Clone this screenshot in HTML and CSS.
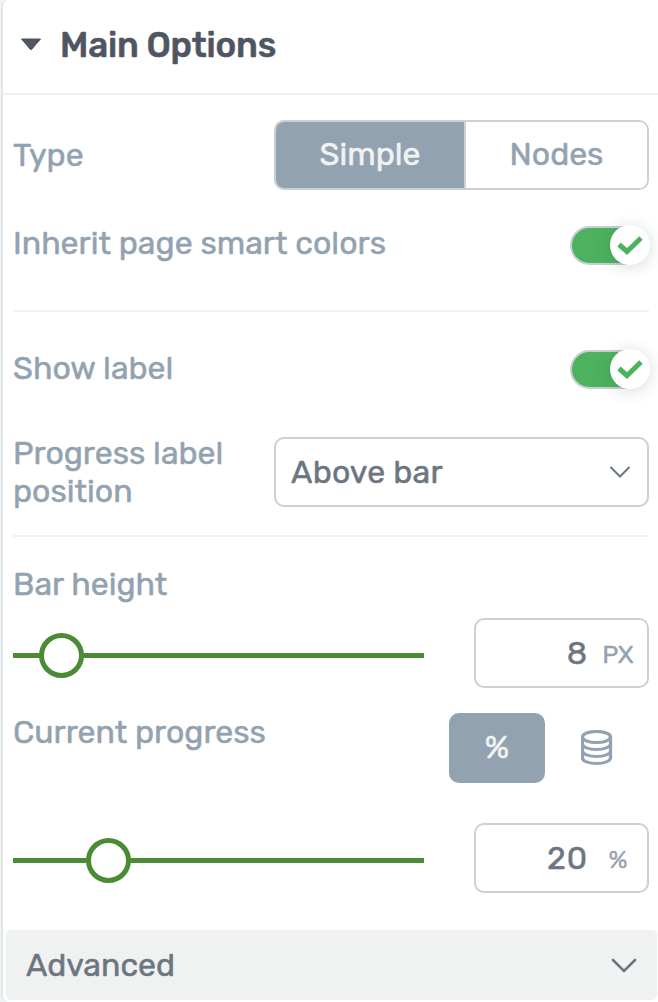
FILE: index.html
```
<!DOCTYPE html>
<html>
<head>
    <meta charset="UTF-8">
    <meta name="viewport" content="width=device-width, initial-scale=1.0">
    <title>Main Options</title>
    <link rel="stylesheet" href="styles.css">
</head>
<body>
    <div class="panel">
        <div class="panel-header">
            <svg class="caret" width="22" height="13" viewBox="0 0 22 13"><path d="M1.500 1h19L12 11q-1 1-2 0z" fill="#4f5661" stroke="#4f5661" stroke-linejoin="round"/></svg>
            <h2>Main Options</h2>
        </div>

        <div class="options">
            <!-- Type -->
            <div class="row type-row">
                <span class="label">Type</span>
                <div class="segmented">
                    <button class="segment active">Simple</button>
                    <button class="segment">Nodes</button>
                </div>
            </div>

            <div class="row toggle-row">
                <span class="label">Inherit page smart colors</span>
                <div class="toggle">
                    <div class="knob"><svg width="26" height="20" viewBox="0 0 26 20"><path d="M2 9.500l8 7L24 3" fill="none" stroke="#4cb25e" stroke-width="5"/></svg></div>
                </div>
            </div>

            <!-- Label -->
            <div class="row toggle-row show-row">
                <span class="label">Show label</span>
                <div class="toggle">
                    <div class="knob"><svg width="26" height="20" viewBox="0 0 26 20"><path d="M2 9.500l8 7L24 3" fill="none" stroke="#4cb25e" stroke-width="5"/></svg></div>
                </div>
            </div>

            <div class="row position-row">
                <span class="label">Progress label<br>position</span>
                <div class="select">
                    <span>Above bar</span>
                    <svg width="22" height="14" viewBox="0 0 22 14"><path d="M1.500 2L11 11.500 20.500 2" fill="none" stroke="#6c7681" stroke-width="2"/></svg>
                </div>
            </div>

            <!-- Bar height -->
            <div class="label bar-label">Bar height</div>
            <div class="row slider-row">
                <div class="slider"><div class="handle" style="left: 26px"></div></div>
                <div class="number"><span class="value">8</span><span class="unit">PX</span></div>
            </div>

            <!-- Current progress -->
            <div class="row progress-row">
                <span class="label">Current progress</span>
                <div class="modes">
                    <button class="mode active">%</button>
                    <button class="mode">
                        <svg width="32" height="36" viewBox="0 0 32 36" fill="none" stroke="#93a2b0" stroke-width="3.200">
                            <ellipse cx="15.500" cy="7" rx="14" ry="5.500"/>
                            <path d="M1.500 7v21c0 3 6.300 5.500 14 5.500s14-2.500 14-5.500V7"/>
                            <path d="M1.500 14c0 3 6.300 5.500 14 5.500s14-2.500 14-5.500M1.500 21c0 3 6.300 5.500 14 5.500s14-2.500 14-5.500"/>
                        </svg>
                    </button>
                </div>
            </div>
            <div class="row slider-row">
                <div class="slider"><div class="handle" style="left: 73px"></div></div>
                <div class="number"><span class="value">20</span><span class="unit">%</span></div>
            </div>
        </div>

        <div class="advanced">
            <span>Advanced</span>
            <svg width="26" height="16" viewBox="0 0 26 16"><path d="M2 3l11 11L24 3" fill="none" stroke="#6c7681" stroke-width="2.600" stroke-linecap="round"/></svg>
        </div>
    </div>
</body>
</html>
```
FILE: styles.css
```
* {
    box-sizing: border-box;
}
body {
    margin: 0;
    background: #f2f4f4;
    font-family: Rubik, Roboto, sans-serif;
    font-size: 32px;
    line-height: 38px;
    color: #6c7681;
    -webkit-text-stroke: 0.5px;
}
.panel {
    height: 1002px;
    margin-left: 1px;
    background: #fff;
    border-left: 2px solid #dfe8ea;
    border-radius: 7px 0 0 7px;
    overflow: hidden;
}
.panel-header {
    display: flex;
    align-items: center;
    height: 95px;
    padding: 0 0 4px 17px;
    border-bottom: 2px solid #f0f1f1;
}
.caret {
    margin-right: 18px;
}
h2 {
    margin: 0;
    font-size: 35px;
    font-weight: 500;
    letter-spacing: -0.2px;
    color: #4f5661;
}
.options {
    padding: 0 9px 0 10px;
}
.row {
    display: flex;
    justify-content: space-between;
}
.label {
    color: #93a2b0;
    white-space: nowrap;
}
.type-row {
    padding-top: 25px;
    align-items: center;
}
.segmented {
    display: flex;
    width: 375px;
    height: 70px;
    border: 2px solid #cad0d5;
    border-radius: 10px;
    overflow: hidden;
}
.segment {
    flex: 1;
    padding: 0 0 2px;
    border: none;
    background: #fff;
    font: inherit;
    color: #93a2b0;
}
.segment.active {
    flex: 0 0 190px;
    border-right: 2px solid #cad0d5;
    background: #93a2b0;
    color: #f1f3f3;
}
.toggle-row {
    height: 122px;
    padding-top: 34px;
    border-bottom: 2px solid #f0f1f1;
}
.show-row {
    height: 125px;
    padding-top: 37px;
    border-bottom: none;
}
.toggle {
    display: flex;
    justify-content: flex-end;
    width: 79px;
    height: 39px;
    margin-top: 2px;
    border: 2px solid #c8ced4;
    border-radius: 20px;
    background: #4cb25e;
}
.show-row .toggle {
    margin-top: 1px;
}
.knob {
    display: flex;
    flex: none;
    align-items: center;
    justify-content: center;
    width: 40px;
    height: 40px;
    margin: -3px -3px 0 0;
    padding-right: 1px;
    border-radius: 50%;
    background: #fff;
    box-shadow: 0 2px 16px rgba(50, 70, 70, 0.2);
}
.position-row {
    height: 100px;
    border-bottom: 2px solid #f0f1f1;
}
.position-row .label {
    margin-top: -3px;
}
.select {
    display: flex;
    align-items: center;
    justify-content: space-between;
    width: 375px;
    height: 70px;
    padding: 0 16px 0 15px;
    border: 2px solid #cad0d5;
    border-radius: 10px;
    letter-spacing: 0.2px;
}
.bar-label {
    height: 81px;
    padding-top: 28px;
}
.slider-row {
    height: 70px;
    align-items: center;
}
.slider {
    position: relative;
    width: 411px;
    height: 5px;
    margin-top: 5px;
    background: #4b8b36;
}
.handle {
    position: absolute;
    top: -20px;
    width: 45px;
    height: 45px;
    border: 5px solid #4b8b36;
    border-radius: 50%;
    background: #fff;
}
.number {
    display: flex;
    align-items: center;
    justify-content: flex-end;
    width: 175px;
    height: 70px;
    padding: 0 13px 0 0;
    border: 2px solid #cad0d5;
    border-radius: 10px;
}
.value {
    letter-spacing: 1px;
}
.unit {
    width: 32px;
    margin-left: 14px;
    padding-top: 3px;
    font-size: 25px;
    text-align: center;
    color: #93a2b0;
    -webkit-text-stroke: 0.3px;
}
.progress-row {
    height: 135px;
    padding-top: 25px;
}
.modes {
    display: flex;
}
.mode {
    width: 104px;
    height: 70px;
    padding: 0;
    border: none;
    border-radius: 10px;
    background: none;
    font: inherit;
}
.mode svg {
    display: block;
    margin: 0 auto;
}
.mode.active {
    width: 96px;
    padding-bottom: 2px;
    background: #93a2b0;
    color: #f1f3f3;
}
.advanced {
    display: flex;
    align-items: center;
    justify-content: space-between;
    height: 70px;
    margin: 37px 1px 0 3px;
    padding: 0 20px;
    border-radius: 5px;
    background: #f0f2f1;
}
```
